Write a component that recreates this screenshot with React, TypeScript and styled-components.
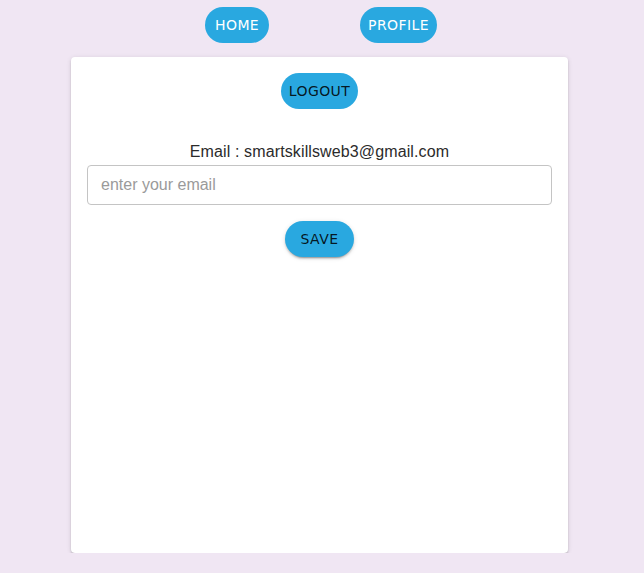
import React from "react";
import styled, { createGlobalStyle, css } from "styled-components";

const Global = createGlobalStyle`
  html, body { margin: 0; padding: 0; background: #f0e6f3; }
  * { box-sizing: border-box; }
`;

const Page = styled.div`
  width: 639px;
  padding-top: 7px;
`;

const Nav = styled.nav`
  display: flex;
  justify-content: center;
  gap: 91px;
  margin-left: 3px;
`;

const Pill = styled.button<{ $dark?: boolean; $raised?: boolean }>`
  min-width: 64px;
  height: 36px;
  padding: 0 8px;
  border: none;
  border-radius: 18px;
  background: #29a8e0;
  color: ${(p) => (p.$dark ? "rgba(0,0,0,0.87)" : "#ffffff")};
  font-family: "DejaVu Sans", sans-serif;
  font-size: 14px;
  font-weight: 500;
  letter-spacing: 0.4px;
  text-transform: uppercase;
  cursor: pointer;
  ${(p) =>
    p.$raised &&
    css`
      min-width: 69px;
      box-shadow: 0 3px 1px -2px rgba(0,0,0,0.2), 0 2px 2px 0 rgba(0,0,0,0.14), 0 1px 5px 0 rgba(0,0,0,0.12);
    `}
`;

const Card = styled.main`
  width: 497px;
  height: 496px;
  margin: 14px auto 0;
  background: #fff;
  border-radius: 4px;
  padding: 16px;
  display: flex;
  flex-direction: column;
  align-items: center;
  box-shadow: 0 3px 1px -2px rgba(0,0,0,0.2), 0 2px 2px 0 rgba(0,0,0,0.14), 0 1px 5px 0 rgba(0,0,0,0.12);
`;

const EmailLabel = styled.div`
  margin-top: 34px;
  font-family: "Liberation Sans", Arial, sans-serif;
  font-size: 16px;
  line-height: 18px;
  letter-spacing: 0.12px;
  color: #2b2b2b;
`;

const Input = styled.input`
  margin-top: 4px;
  width: 100%;
  height: 40px;
  padding: 0 13px;
  border: 1px solid #c4c4c4;
  border-radius: 4px;
  font-family: "Liberation Sans", Arial, sans-serif;
  font-size: 16px;
  color: #333;
  outline: none;
  &::placeholder { color: #9a9a9a; }
`;

const SaveRow = styled.div`
  margin-top: 16px;
`;

export default function App() {
  return (
    <Page>
      <Global />
      <Nav>
        <Pill>Home</Pill>
        <Pill>Profile</Pill>
      </Nav>
      <Card>
        <Pill $dark>Logout</Pill>
        <EmailLabel>Email : smartskillsweb3@gmail.com</EmailLabel>
        <Input placeholder="enter your email" />
        <SaveRow>
          <Pill $dark $raised>Save</Pill>
        </SaveRow>
      </Card>
    </Page>
  );
}
